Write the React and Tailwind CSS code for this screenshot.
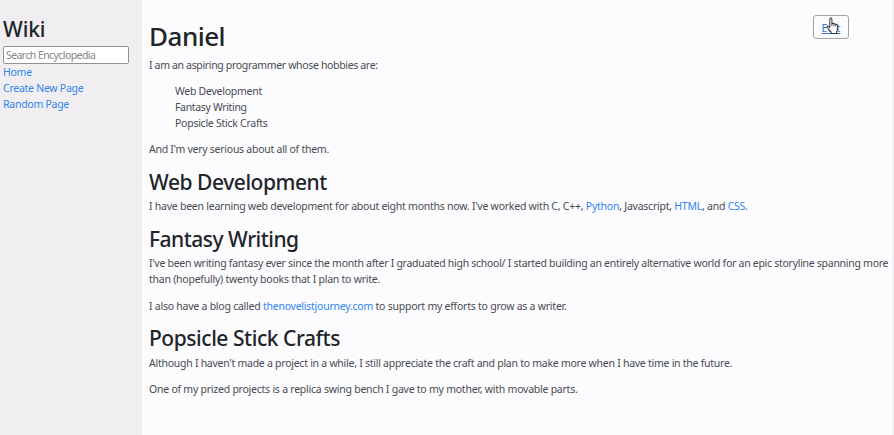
import React from "react";

function Link({ children }) {
  return <a href="#" className="text-[#2f86ee]">{children}</a>;
}

function SectionTitle({ className = "tracking-[-0.45px]", children }) {
  return (
    <h2 className={`mb-[2.2px] whitespace-nowrap text-[21px] leading-[28.5px] font-medium text-[#212529] ${className}`}>
      {children}
    </h2>
  );
}

function Paragraph({ className = "tracking-[-0.24px]", children }) {
  return <p className={`mb-[10.3px] whitespace-nowrap ${className}`}>{children}</p>;
}

function HandCursor() {
  return (
    <svg className="absolute top-[1px] left-[12px] h-[18px] w-[14px]" viewBox="0 0 14 17" preserveAspectRatio="none">
      <path
        d="M4.2 1.2c.8-.5 1.7 0 1.7 1v4.2c.4-.6 1.6-.5 1.9.2.5-.5 1.6-.3 1.8.5.6-.4 1.8 0 1.8 1v3.2c0 1.2-.6 1.7-.8 2.8v1.4H5.2v-1.2C4 12.8 2.2 11.2 1.2 9.7c-.5-.9.5-1.6 1.3-1l1.3 1.2V2.1z"
        fill="#fff"
        stroke="#34373b"
        strokeWidth="1"
        strokeLinejoin="round"
      />
      <path d="M5.9 6.3v2.5M7.9 6.8v2M9.7 7.3v1.7" stroke="#34373b" strokeWidth=".8" fill="none" />
    </svg>
  );
}

export default function App() {
  return (
    <div className="flex h-[435px] w-[894px] overflow-hidden bg-[#fcfbfe] font-['Noto_Sans','Open_Sans',sans-serif] text-[10.5px] leading-[16px] text-[#484c50]">
      <aside className="w-[142px] shrink-0 bg-[#f0eef1] pt-[17px] pl-[3px]">
        <h2 className="mb-[4px] text-[21px] leading-[25px] font-medium tracking-[-0.1px] text-[#212529]">Wiki</h2>
        <input
          className="block h-[18px] w-[126px] rounded-[2px] border border-[#929194] bg-white px-[2px] text-[10.5px] tracking-[-0.58px] placeholder:text-[#858585]"
          placeholder="Search Encyclopedia"
        />
        <nav className="flex flex-col whitespace-nowrap tracking-[-0.26px]">
          <Link>Home</Link>
          <Link>Create New Page</Link>
          <Link>Random Page</Link>
        </nav>
      </aside>
      <main className="relative min-w-0 flex-1 pt-[20px] pl-[7px]">
        <h1 className="mb-[4.7px] text-[26px] leading-[32px] font-medium tracking-[-0.5px] text-[#212529]">Daniel</h1>
        <Paragraph className="tracking-[-0.34px]">I am an aspiring programmer whose hobbies are:</Paragraph>
        <ul className="mb-[10.3px] pl-[26px] tracking-[-0.26px]">
          <li>Web Development</li>
          <li className="tracking-[-0.34px]">Fantasy Writing</li>
          <li>Popsicle Stick Crafts</li>
        </ul>
        <Paragraph className="tracking-[-0.26px]">And I'm very serious about all of them.</Paragraph>
        <SectionTitle>Web Development</SectionTitle>
        <Paragraph className="tracking-[-0.24px]">
          I have been learning web development for about eight months now. I've worked with C, C++, <Link>Python</Link>, Javascript, <Link>HTML</Link>, and <Link>CSS</Link>.
        </Paragraph>
        <SectionTitle className="tracking-[-0.5px]">Fantasy Writing</SectionTitle>
        <Paragraph>
          <span className="tracking-[-0.28px]">I've been writing fantasy ever since the month after I graduated high school/ I started building an entirely alternative world for an epic storyline spanning more</span>
          <br />
          than (hopefully) twenty books that I plan to write.
        </Paragraph>
        <Paragraph>
          I also have a blog called <Link>thenovelistjourney.com</Link> to support my efforts to grow as a writer.
        </Paragraph>
        <SectionTitle>Popsicle Stick Crafts</SectionTitle>
        <Paragraph className="tracking-[-0.26px]">Although I haven't made a project in a while, I still appreciate the craft and plan to make more when I have time in the future.</Paragraph>
        <Paragraph>One of my prized projects is a replica swing bench I gave to my mother, with movable parts.</Paragraph>
        <button className="absolute top-[15px] right-[43px] flex h-[24px] w-[36px] items-center justify-center rounded-[3px] border border-[#a3a3a5] bg-[#fcfbfe] pt-px">
          <span className="text-[#2f78d0] underline">Edit</span>
          <HandCursor />
        </button>
      </main>
      <div className="w-[2px] shrink-0 bg-[#f1f0f3]" />
    </div>
  );
}
